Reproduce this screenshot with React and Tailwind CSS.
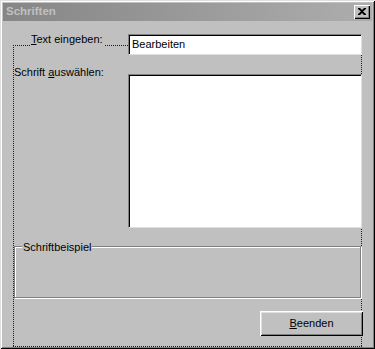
export default function App() {
  const font = { fontFamily: '"Liberation Sans", Arial, sans-serif' }
  const dotsH = 'bg-[image:repeating-linear-gradient(90deg,#0000ff_0_1px,transparent_1px_2px)]'
  const dotsV = 'bg-[image:repeating-linear-gradient(180deg,#0000ff_0_1px,transparent_1px_2px)]'
  return (
    <div className="w-[375px] h-[349px] bg-[#c0c0c0] p-[3px] shadow-[inset_1px_1px_0_#dfdfdf,inset_-1px_-1px_0_#000,inset_2px_2px_0_#fff,inset_-2px_-2px_0_#808080] text-black" style={font}>
      {/* Title bar (inactive) */}
      <div className="h-[18px] flex items-center justify-between bg-gradient-to-r from-[#868686] to-[#adadad] pl-[3px] pr-[2px]">
        <span className="text-[11.5px] font-bold text-[#c0c0c0] leading-none">Schriften</span>
        <button className="w-[16px] h-[14px] bg-[#c0c0c0] flex items-center justify-center shadow-[inset_1px_1px_0_#fff,inset_-1px_-1px_0_#000,inset_-2px_-2px_0_#808080]">
          <svg width="8" height="7" viewBox="0 0 8 7" className="mb-[1px]">
            <path d="M0 0h2l2 2 2-2h2v1L5 3.5 8 6v1H6L4 5 2 7H0V6l3-2.5L0 1z" fill="#000" />
          </svg>
        </button>
      </div>

      {/* Client area */}
      <div className="relative h-[322px] pl-[11px]">
        {/* focus rectangle */}
        <div className="absolute left-[10px] top-[12px] w-[349px] h-[302px]">
          <div className={`absolute left-0 top-0 w-full h-px ${dotsH}`} />
          <div className={`absolute left-0 bottom-0 w-full h-px ${dotsH}`} />
          <div className={`absolute left-0 top-0 w-px h-full ${dotsV}`} />
          <div className={`absolute right-0 top-0 w-px h-full ${dotsV}`} />
        </div>

        {/* Text eingeben */}
        <div className="relative flex items-start mt-[12px]">
          <div className="ml-[16px] w-[74px] h-[14px] bg-[#c0c0c0] pl-[1px] text-[11px] leading-[13px] whitespace-nowrap">
            <u>T</u>ext eingeben:
          </div>
          <div className="ml-[24px] mt-[1px] w-[234px] h-[21px] bg-white border border-t-[#808080] border-l-[#808080] border-b-[#dfdfdf] border-r-[#dfdfdf] shadow-[inset_1px_1px_0_#000] pl-[3px] pt-[3px] text-[11px] leading-[13px]">
            Bearbeiten
          </div>
        </div>

        {/* Schrift auswählen */}
        <div className="relative flex items-start mt-[11px]">
          <div className="w-[114px] text-[11px] leading-[13px] whitespace-nowrap">
            Schrift <u>a</u>uswählen:
          </div>
          <div className="mt-[8px] w-[234px] h-[154px] bg-white border border-t-[#808080] border-l-[#808080] border-b-[#dfdfdf] border-r-[#dfdfdf] shadow-[inset_1px_1px_0_#000]" />
        </div>

        {/* Schriftbeispiel group */}
        <div className="relative mt-[18px] w-[347px] h-[52px] border border-[#808080] shadow-[1px_1px_0_#fff,inset_1px_1px_0_#fff]">
          <span className="absolute left-[7px] -top-[6px] bg-[#c0c0c0] px-[1px] text-[11px] leading-[13px]">
            Schriftbeispiel
          </span>
        </div>

        {/* Beenden */}
        <div className="relative mt-[13px] ml-[246px]">
          <button className="w-[103px] h-[25px] bg-[#c0c0c0] shadow-[inset_1px_1px_0_#fff,inset_-1px_-1px_0_#000,inset_2px_2px_0_#dfdfdf,inset_-2px_-2px_0_#808080] text-[11px] leading-[13px] flex items-center justify-center pb-[1px]">
            <span><u>B</u>eenden</span>
          </button>
        </div>
      </div>
    </div>
  )
}
